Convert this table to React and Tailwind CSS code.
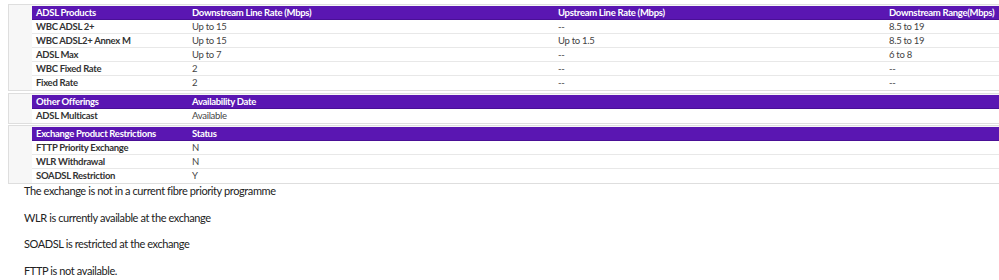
import React from "react";

const products = [
  ["WBC ADSL 2+", "Up to 15", "--", "8.5 to 19"],
  ["WBC ADSL2+ Annex M", "Up to 15", "Up to 1.5", "8.5 to 19"],
  ["ADSL Max", "Up to 7", "--", "6 to 8"],
  ["WBC Fixed Rate", "2", "--", "--"],
  ["Fixed Rate", "2", "--", "--"],
];

const offerings = [["ADSL Multicast", "Available"]];

const restrictions = [
  ["FTTP Priority Exchange", "N"],
  ["WLR Withdrawal", "N"],
  ["SOADSL Restriction", "Y"],
];

const notes = [
  "The exchange is not in a current fibre priority programme",
  "WLR is currently available at the exchange",
  "SOADSL is restricted at the exchange",
  "FTTP is not available.",
];

// One bordered block with the grey spacer column on the left
const InfoTable = ({ headers, rows, cols, className = "" }) => (
  <div className={`flex border border-[#dedede] bg-[#f7f7f7] ${className}`}>
    <div className="w-[23px] shrink-0" />
    <div className="flex-1 pt-[1px]">
      <div className={`grid ${cols} h-[14px] bg-[#5a16b2] border-b border-[#4a0f96] text-white font-bold`}>
        {headers.map((h) => (
          <div key={h} className="pl-[4px] leading-[13px] whitespace-nowrap">
            {h}
          </div>
        ))}
      </div>
      {rows.map((row, i) => (
        <div
          key={i}
          className={`grid ${cols} h-[14px] bg-white ${
            i < rows.length - 1 ? "border-b border-[#e8e8e8]" : ""
          }`}
        >
          {row.map((cell, j) => (
            <div
              key={j}
              className={`pl-[4px] leading-[14px] whitespace-nowrap ${
                j === 0 ? "font-bold text-[#333]" : "text-[#444]"
              }`}
            >
              {cell}
            </div>
          ))}
        </div>
      ))}
    </div>
  </div>
);

export default function App() {
  return (
    <div className="w-[999px] h-[280px] overflow-hidden bg-white font-['Lato',sans-serif]">
      <div className="w-[1010px] pl-[8px] pt-[4px] text-[9.5px] tracking-[-0.3px]">
        <InfoTable
          headers={[
            "ADSL Products",
            "Downstream Line Rate (Mbps)",
            "Upstream Line Rate (Mbps)",
            "Downstream Range(Mbps)",
          ]}
          rows={products}
          cols="grid-cols-[156px_366px_331px_1fr]"
        />
        <InfoTable
          headers={["Other Offerings", "Availability Date"]}
          rows={offerings}
          cols="grid-cols-[156px_1fr]"
          className="mt-[2px]"
        />
        <InfoTable
          headers={["Exchange Product Restrictions", "Status"]}
          rows={restrictions}
          cols="grid-cols-[156px_1fr]"
          className="mt-[1px]"
        />
      </div>
      <div className="pl-[24px] text-[11px] tracking-[-0.4px] text-[#222] leading-[15px] -mt-[1px]">
        {notes.map((n) => (
          <p key={n} className="mb-[11.7px]">
            {n}
          </p>
        ))}
      </div>
    </div>
  );
}
